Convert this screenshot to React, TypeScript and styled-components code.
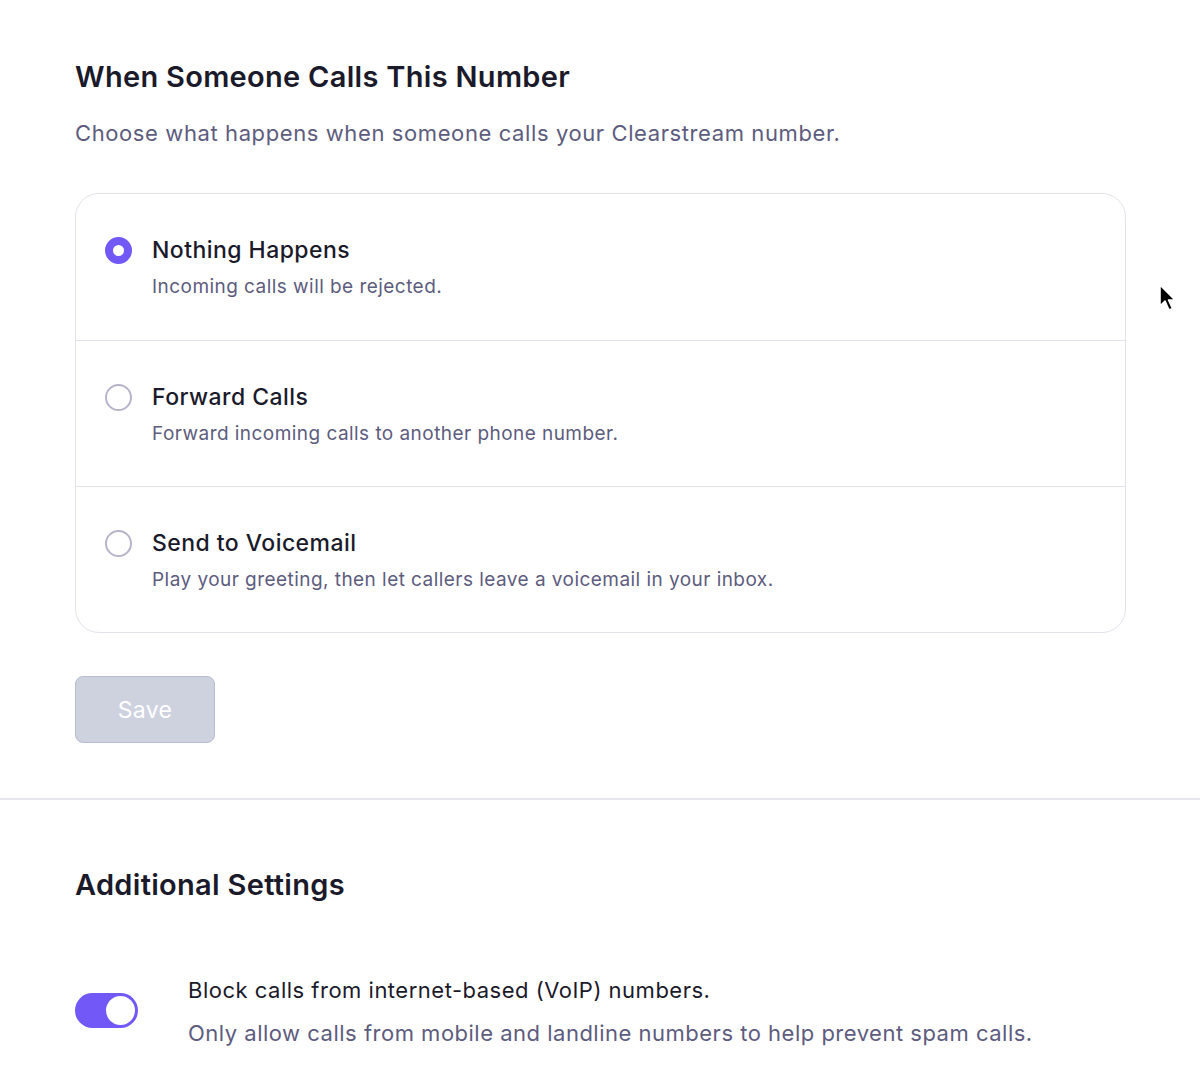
import React, { useState } from "react";
import styled, { createGlobalStyle } from "styled-components";

const Global = createGlobalStyle`
  html, body { margin: 0; padding: 0; background: #ffffff; }
  body { font-family: "Inter", "Noto Sans", sans-serif; color: #1b1a2b; -webkit-font-smoothing: antialiased; }
  * { box-sizing: border-box; }
`;

const Page = styled.div`
  position: relative;
  width: 1200px;
  min-height: 1072px;
  overflow: hidden;
`;

const Section = styled.section`
  padding: 58px 74px 55px 75px;
`;

const BottomSection = styled.section`
  padding: 66px 74px 0 75px;
  border-top: 2px solid #e8e7ef;
`;

const Title = styled.h2`
  margin: 0;
  font-size: 29px;
  font-weight: 600;
  line-height: 38px;
  color: #1b1a2b;
  letter-spacing: 0.3px;
`;

const Subtitle = styled.p`
  margin: 22px 0 0;
  font-size: 22px;
  line-height: 30px;
  color: #5d5c7e;
  letter-spacing: 0.6px;
`;

const Card = styled.div`
  margin-top: 45px;
  border: 1.5px solid #e2e2ea;
  border-radius: 24px;
  overflow: hidden;
`;

const Option = styled.label`
  display: flex;
  align-items: flex-start;
  gap: 20px;
  height: 146px;
  padding: 41px 28px 0 29px;
  cursor: pointer;
  & + & { border-top: 1.5px solid #e2e2ea; }
`;

const Radio = styled.span<{ $checked: boolean }>`
  flex: none;
  width: 27px;
  height: 27px;
  margin-top: 2px;
  border-radius: 50%;
  border: ${(p) => (p.$checked ? "8px solid #7258f6" : "2px solid #b5b4cb")};
  background: #fff;
`;

const OptionText = styled.div`
  display: flex;
  flex-direction: column;
`;

const OptionLabel = styled.span`
  font-size: 23px;
  font-weight: 500;
  line-height: 30px;
  color: #1b1a2b;
  letter-spacing: 0.45px;
`;

const OptionDesc = styled.span`
  margin-top: 9px;
  font-size: 19px;
  line-height: 26px;
  color: #5d5c7e;
  letter-spacing: 0.45px;
`;

const SaveButton = styled.button`
  margin-top: 43px;
  width: 140px;
  height: 67px;
  border-radius: 8px;
  border: 1.5px solid #b8bdd0;
  background: #ced2df;
  color: #ffffff;
  font-family: inherit;
  font-size: 23px;
  letter-spacing: 0.3px;
  cursor: not-allowed;
`;

const SettingRow = styled.div`
  display: flex;
  align-items: flex-start;
  gap: 50px;
  margin-top: 71px;
`;

const Toggle = styled.span<{ $on: boolean }>`
  flex: none;
  position: relative;
  margin-top: 18px;
  width: 63px;
  height: 35px;
  border-radius: 18px;
  background: ${(p) => (p.$on ? "#7258f6" : "#d5d5e0")};
  cursor: pointer;
  &::after {
    content: "";
    position: absolute;
    top: 3px;
    left: ${(p) => (p.$on ? "31px" : "3px")};
    width: 29px;
    height: 29px;
    border-radius: 50%;
    background: #fff;
  }
`;

const SettingText = styled.div`
  display: flex;
  flex-direction: column;
`;

const SettingLabel = styled.span`
  font-size: 22px;
  line-height: 30px;
  color: #1b1a2b;
  letter-spacing: 0.5px;
`;

const SettingDesc = styled.span`
  margin-top: 13px;
  font-size: 22px;
  line-height: 30px;
  color: #5d5c7e;
  letter-spacing: 0.5px;
`;

const Cursor = styled.svg`
  position: absolute;
  left: 1158px;
  top: 283px;
`;

const options = [
  { id: "nothing", label: "Nothing Happens", desc: "Incoming calls will be rejected." },
  { id: "forward", label: "Forward Calls", desc: "Forward incoming calls to another phone number." },
  { id: "voicemail", label: "Send to Voicemail", desc: "Play your greeting, then let callers leave a voicemail in your inbox." },
];

export default function App() {
  const [selected, setSelected] = useState("nothing");
  const [block, setBlock] = useState(true);
  return (
    <Page>
      <Global />
      <Section>
        <Title>When Someone Calls This Number</Title>
        <Subtitle>Choose what happens when someone calls your Clearstream number.</Subtitle>
        <Card>
          {options.map((o) => (
            <Option key={o.id} onClick={() => setSelected(o.id)}>
              <Radio $checked={selected === o.id} />
              <OptionText>
                <OptionLabel>{o.label}</OptionLabel>
                <OptionDesc>{o.desc}</OptionDesc>
              </OptionText>
            </Option>
          ))}
        </Card>
        <SaveButton disabled>Save</SaveButton>
      </Section>
      <BottomSection>
        <Title>Additional Settings</Title>
        <SettingRow>
          <Toggle $on={block} onClick={() => setBlock(!block)} />
          <SettingText>
            <SettingLabel>Block calls from internet-based (VoIP) numbers.</SettingLabel>
            <SettingDesc>Only allow calls from mobile and landline numbers to help prevent spam calls.</SettingDesc>
          </SettingText>
        </SettingRow>
      </BottomSection>
      <Cursor width="22" height="30" viewBox="0 0 22 30">
        <path d="M2 2 L2 23 L7 18 L11 27 L14.5 25.5 L10.5 17 L17 17 Z" fill="#000" stroke="#fff" strokeWidth="1.6" strokeLinejoin="round" />
      </Cursor>
    </Page>
  );
}
